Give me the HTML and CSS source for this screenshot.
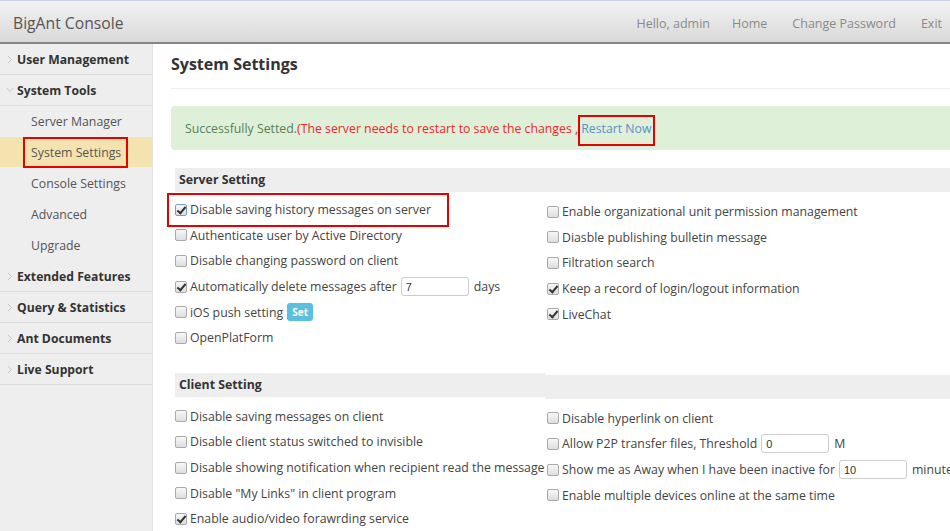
FILE: index.html
```html
<!DOCTYPE html>
<html lang="en">
<head>
    <meta charset="UTF-8">
    <title>BigAnt Console</title>
    <link rel="stylesheet" href="styles.css">
</head>
<body>
    <div class="topbar">
        <div class="brand">BigAnt Console</div>
        <div class="topnav">
            <span class="hello">Hello, admin</span>
            <a href="#">Home</a>
            <a href="#">Change Password</a>
            <a href="#">Exit</a>
        </div>
    </div>

    <div class="layout">
        <div class="sidebar">
            <ul class="menu">
                <li class="group">
                    <a href="#" class="group-title"><svg class="chev" width="6" height="9" viewBox="0 0 6 9"><path d="M1 1l3.5 3.5L1 8" fill="none" stroke="#c4c4c4" stroke-width="1"/></svg>User Management</a>
                </li>
                <li class="group">
                    <a href="#" class="group-title"><svg class="chev" width="9" height="6" viewBox="0 0 9 6"><path d="M1 1l3.5 3.5L8 1" fill="none" stroke="#c4c4c4" stroke-width="1"/></svg>System Tools</a>
                    <ul class="submenu">
                        <li><a href="#">Server Manager</a></li>
                        <li class="active"><a href="#"><span class="marked">System Settings</span></a></li>
                        <li><a href="#">Console Settings</a></li>
                        <li><a href="#">Advanced</a></li>
                        <li><a href="#">Upgrade</a></li>
                    </ul>
                </li>
                <li class="group">
                    <a href="#" class="group-title"><svg class="chev" width="6" height="9" viewBox="0 0 6 9"><path d="M1 1l3.5 3.5L1 8" fill="none" stroke="#c4c4c4" stroke-width="1"/></svg>Extended Features</a>
                </li>
                <li class="group">
                    <a href="#" class="group-title"><svg class="chev" width="6" height="9" viewBox="0 0 6 9"><path d="M1 1l3.5 3.5L1 8" fill="none" stroke="#c4c4c4" stroke-width="1"/></svg>Query &amp; Statistics</a>
                </li>
                <li class="group">
                    <a href="#" class="group-title"><svg class="chev" width="6" height="9" viewBox="0 0 6 9"><path d="M1 1l3.5 3.5L1 8" fill="none" stroke="#c4c4c4" stroke-width="1"/></svg>Ant Documents</a>
                </li>
                <li class="group">
                    <a href="#" class="group-title"><svg class="chev" width="6" height="9" viewBox="0 0 6 9"><path d="M1 1l3.5 3.5L1 8" fill="none" stroke="#c4c4c4" stroke-width="1"/></svg>Live Support</a>
                </li>
            </ul>
        </div>

        <div class="content">
            <h1 class="page-title">System Settings</h1>

            <div class="alert">
                Successfully Setted.<span class="warn">(The server needs to restart to save the changes , </span><a href="#" class="restart">Restart Now</a>
            </div>

            <div class="section">
                <div class="section-head">
                    <div class="head-cell">Server Setting</div>
                    <div class="head-cell"></div>
                </div>
                <div class="section-body">
                    <div class="col">
                        <label class="opt flagged"><input type="checkbox" checked> Disable saving history messages on server</label>
                        <label class="opt"><input type="checkbox"> Authenticate user by Active Directory</label>
                        <label class="opt"><input type="checkbox"> Disable changing password on client</label>
                        <label class="opt"><input type="checkbox" checked> Automatically delete messages after <input type="text" class="num" value="7"> days</label>
                        <label class="opt"><input type="checkbox"> iOS push setting <button class="btn-set">Set</button></label>
                        <label class="opt"><input type="checkbox"> OpenPlatForm</label>
                    </div>
                    <div class="col col-right">
                        <label class="opt"><input type="checkbox"> Enable organizational unit permission management</label>
                        <label class="opt"><input type="checkbox"> Diasble publishing bulletin message</label>
                        <label class="opt"><input type="checkbox"> Filtration search</label>
                        <label class="opt"><input type="checkbox" checked> Keep a record of login/logout information</label>
                        <label class="opt"><input type="checkbox" checked> LiveChat</label>
                    </div>
                </div>
            </div>

            <div class="section">
                <div class="section-head">
                    <div class="head-cell">Client Setting</div>
                    <div class="head-cell shifted"></div>
                </div>
                <div class="section-body">
                    <div class="col">
                        <label class="opt"><input type="checkbox"> Disable saving messages on client</label>
                        <label class="opt"><input type="checkbox"> Disable client status switched to invisible</label>
                        <label class="opt"><input type="checkbox"> Disable showing notification when recipient read the message</label>
                        <label class="opt"><input type="checkbox"> Disable "My Links" in client program</label>
                        <label class="opt"><input type="checkbox" checked> Enable audio/video forawrding service</label>
                    </div>
                    <div class="col col-right">
                        <label class="opt"><input type="checkbox"> Disable hyperlink on client</label>
                        <label class="opt"><input type="checkbox"> Allow P2P transfer files, Threshold <input type="text" class="num" value="0"> M</label>
                        <label class="opt"><input type="checkbox"> Show me as Away when I have been inactive for <input type="text" class="num" value="10"> minute</label>
                        <label class="opt"><input type="checkbox"> Enable multiple devices online at the same time</label>
                    </div>
                </div>
            </div>
        </div>
    </div>
</body>
</html>
```

FILE: styles.css
```css
body {
    margin: 0;
    padding: 0;
    width: 950px;
    height: 531px;
    overflow: hidden;
    font-family: "Open Sans", "Liberation Sans", sans-serif;
    font-size: 12px;
    color: #444;
    background-color: #fff;
}

a {
    text-decoration: none;
}

ul {
    list-style: none;
    margin: 0;
    padding: 0;
}

/* Top bar */
.topbar {
    height: 44px;
    box-sizing: border-box;
    padding: 3px 8px 0 13px;
    border-top: 1px solid #c8d2e4;
    border-bottom: 2px solid #858585;
    background: linear-gradient(#f2f2f2, #d9d9d9);
    display: flex;
    align-items: center;
    justify-content: space-between;
}

.brand {
    font-size: 15.7px;
    color: #555;
}

.topnav {
    display: flex;
    gap: 25px;
    color: #8a8a8a;
    font-size: 12.5px;
}

.topnav .hello {
    margin-right: -3px;
}

.topnav a {
    color: #8a8a8a;
}

/* Layout */
.layout {
    display: flex;
    height: 487px;
}

.sidebar {
    width: 153px;
    flex-shrink: 0;
    background-color: #eee;
    border-right: 1px solid #e2e2e2;
    box-sizing: border-box;
}

.group-title {
    display: flex;
    align-items: center;
    height: 30px;
    border-bottom: 1px solid #dcdcdc;
    font-weight: bold;
    color: #333;
    font-size: 12.2px;
    padding-left: 3px;
}

.group-title .chev {
    width: 14px;
    flex-shrink: 0;
}

.submenu li a {
    display: flex;
    align-items: center;
    height: 31px;
    padding-left: 31px;
    color: #555;
    font-size: 12.3px;
}

.submenu li.active a {
    background-color: #f4e3ae;
    height: 30px;
    margin-bottom: 1px;
    padding-left: 23px;
}

.marked {
    border: 2px solid #e60000;
    padding: 5px 5px 5px 6px;
}

/* Content */
.content {
    flex: 1;
    min-width: 0;
    padding-left: 18px;
    overflow: hidden;
}

.page-title {
    width: 820px;
    margin: 8px 0 0;
    padding-bottom: 12px;
    border-bottom: 1px solid #eee;
    font-size: 16px;
    line-height: 24px;
    color: #333;
}

.alert {
    width: 820px;
    margin-top: 17px;
    height: 44px;
    box-sizing: border-box;
    display: flex;
    align-items: center;
    padding: 1px 0 0 14px;
    background-color: #dff0d8;
    border-radius: 4px;
    color: #58805a;
    font-size: 12.3px;
    white-space: nowrap;
}

.warn {
    color: #f0262c;
}

.restart {
    color: #5b8fcc;
    border: 2px solid #e60000;
    padding: 3px 1px 7px 1px;
    margin-top: 3px;
}

.section {
    margin: 18px 0 0 4px;
    width: 820px;
}

.section + .section {
    margin-top: 22px;
}

.section-head {
    display: grid;
    grid-template-columns: 370px 1fr;
}

.head-cell {
    height: 24px;
    line-height: 24px;
    background-color: #eee;
    padding-left: 4px;
    font-weight: bold;
    color: #333;
    font-size: 12.3px;
}

.head-cell.shifted {
    margin-top: 2px;
}

.section-body {
    display: grid;
    grid-template-columns: 372px 1fr;
    padding-top: 5px;
}

.col {
    display: flex;
    flex-direction: column;
}

.col-right {
    padding-top: 2px;
}

.opt {
    display: flex;
    align-items: center;
    height: 25.6px;
    white-space: nowrap;
    color: #444;
    font-size: 12.3px;
}

.opt input[type="checkbox"] {
    appearance: none;
    -webkit-appearance: none;
    width: 12px;
    height: 12px;
    margin: 0 3px 0 0;
    border: 1px solid #a9a9a9;
    border-radius: 2px;
    background: linear-gradient(#f7f7f7, #dedede);
    position: relative;
    flex-shrink: 0;
}

.opt input[type="checkbox"]:checked::after {
    content: "";
    position: absolute;
    left: 3px;
    top: 0px;
    width: 3px;
    height: 7px;
    border: solid #333;
    border-width: 0 2px 2px 0;
    transform: rotate(40deg);
}

.flagged {
    position: relative;
}

.flagged input[type="checkbox"] {
    border-color: #7a9cc8;
}

.flagged::after {
    content: "";
    position: absolute;
    left: -8px;
    width: 278px;
    top: -4px;
    bottom: -4px;
    border: 2px solid #e60000;
}

.num {
    width: 68px;
    height: 19px;
    box-sizing: border-box;
    margin: 0 5px 0 4px;
    padding: 0 4px;
    border: 1px solid #ccc;
    border-radius: 3px;
    font-family: "Liberation Sans", sans-serif;
    font-size: 11px;
    color: #333;
}

.btn-set {
    margin-left: 4px;
    width: 26px;
    height: 18px;
    padding: 0;
    border: none;
    border-radius: 3px;
    background-color: #5bc0de;
    color: #fff;
    font-family: "Open Sans", sans-serif;
    font-size: 10px;
    font-weight: bold;
}
```
